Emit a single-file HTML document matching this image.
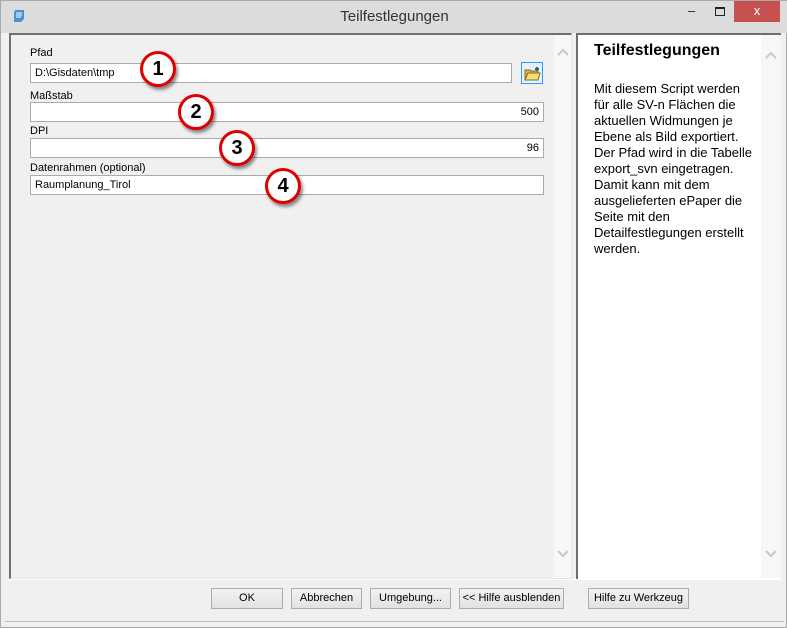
<!DOCTYPE html>
<html><head><style>
*{box-sizing:border-box;margin:0;padding:0}
body{width:787px;height:628px;background:#d6d6d6;font-family:"Liberation Sans",sans-serif;font-size:11px;color:#000;position:relative;overflow:hidden}
.win{position:absolute;left:0;top:0;width:787px;height:628px;background:#f0f0f0;border:1px solid #aaa}
.title{position:absolute;left:0;top:0;width:787px;height:32px;background:#dcdcdc;text-align:center;font-size:15px;line-height:32px;color:#333}
.close{position:absolute;left:733px;top:0;width:46px;height:21px;background:#c75050;color:#fff;text-align:center;line-height:20px;font-size:13px}
.ctl{position:absolute;top:0;font-size:13px;color:#222}
.left{position:absolute;left:8px;top:32px;width:563px;height:546px;background:#f0f0f0;border-left:2px solid #6f6f6f;border-top:2px solid #6f6f6f;border-right:1px solid #e6e6e6;border-bottom:1px solid #e6e6e6}
.sbl{position:absolute;left:553px;top:34px;width:17px;height:543px;background:#f7f7f7}
.right{position:absolute;left:575px;top:32px;width:205px;height:546px;background:#fff;border-left:2px solid #6f6f6f;border-top:2px solid #6f6f6f}
.sbr{position:absolute;left:760px;top:34px;width:20px;height:543px;background:#f7f7f7}
.lbl{position:absolute;left:29px;font-size:11px}
.inp{position:absolute;left:29px;height:20px;background:#fff;border:1px solid #ababab;font-size:11px;line-height:18px;padding:0 4px}
.btn{position:absolute;top:587px;height:21px;border:1px solid #acacac;background:linear-gradient(#f2f2f2,#e2e2e2);text-align:center;line-height:19px;font-size:11px}
.circ{position:absolute;width:36px;height:36px;border-radius:50%;background:#fff;border:3px solid #e00000;box-shadow:2px 3px 3px rgba(0,0,0,.45);text-align:center;font-weight:bold;font-size:20px;line-height:30px}
.help{position:absolute;left:593px;top:80px;font-size:13px;line-height:16px;width:160px;color:#000}
</style></head><body>
<div class="win">
<div class="title">Teilfestlegungen</div>
<svg style="position:absolute;left:10px;top:7px" width="16" height="16" viewBox="0 0 16 16"><path d="M4 2h9v9l-3 3H3V5z" fill="#4a8fd8"/><path d="M5 5h6M5 7h6M5 9h5" stroke="#fff" stroke-width="1"/></svg>
<div class="ctl" style="left:687px;top:2px">&#8211;</div>
<div style="position:absolute;left:714px;top:6px;width:10px;height:9px;border:1px solid #222;border-top-width:2px"></div>
<div class="close">x</div>
<div class="left"></div>
<div class="sbl"></div>
<svg style="position:absolute;left:556px;top:47px" width="12" height="8"><path d="M1 7l5-5 5 5" fill="none" stroke="#c8c8c8" stroke-width="2"/></svg>
<svg style="position:absolute;left:556px;top:549px" width="12" height="8"><path d="M1 1l5 5 5-5" fill="none" stroke="#c8c8c8" stroke-width="2"/></svg>
<div class="right"></div>
<div class="sbr"></div>
<svg style="position:absolute;left:764px;top:50px" width="12" height="8"><path d="M1 7l5-5 5 5" fill="none" stroke="#c8c8c8" stroke-width="2"/></svg>
<svg style="position:absolute;left:764px;top:549px" width="12" height="8"><path d="M1 1l5 5 5-5" fill="none" stroke="#c8c8c8" stroke-width="2"/></svg>
<div style="position:absolute;left:8px;top:578px;width:772px;height:1px;background:#fff"></div>
<div style="position:absolute;left:4px;top:620px;width:779px;height:1px;background:#bdbdbd"></div>

<div class="lbl" style="top:46px">Pfad</div>
<div class="inp" style="top:62px;width:482px">D:\Gisdaten\tmp</div>
<div style="position:absolute;left:520px;top:61px;width:22px;height:22px;border:1px solid #3399ff;background:#e5f1fb"></div>
<svg style="position:absolute;left:523px;top:64px" width="17" height="16" viewBox="0 0 17 16"><path d="M1 5h5l1 1h7v9H1z" fill="#d9b44a" stroke="#8a6d1a"/><path d="M1 15l3-7h12l-2 7z" fill="#f4dc7a" stroke="#8a6d1a"/><path d="M11 4h4M13 2v4" stroke="#1d5fb0" stroke-width="2"/></svg>
<div class="lbl" style="top:89px">Maßstab</div>
<div class="inp" style="top:101px;width:514px;text-align:right">500</div>
<div class="lbl" style="top:124px">DPI</div>
<div class="inp" style="top:137px;width:514px;text-align:right">96</div>
<div class="lbl" style="top:161px">Datenrahmen (optional)</div>
<div class="inp" style="top:174px;width:514px">Raumplanung_Tirol</div>

<div class="circ" style="left:139px;top:50px">1</div>
<div class="circ" style="left:177px;top:93px">2</div>
<div class="circ" style="left:218px;top:129px">3</div>
<div class="circ" style="left:264px;top:167px">4</div>

<div style="position:absolute;left:593px;top:41px;font-size:16px;font-weight:bold">Teilfestlegungen</div>
<div class="help">Mit diesem Script werden für alle SV-n Flächen die aktuellen Widmungen je Ebene als Bild exportiert. Der Pfad wird in die Tabelle export_svn eingetragen. Damit kann mit dem ausgelieferten ePaper die Seite mit den Detailfestlegungen erstellt werden.</div>

<div class="btn" style="left:210px;width:72px">OK</div>
<div class="btn" style="left:290px;width:71px">Abbrechen</div>
<div class="btn" style="left:369px;width:81px">Umgebung...</div>
<div class="btn" style="left:458px;width:105px">&lt;&lt; Hilfe ausblenden</div>
<div class="btn" style="left:587px;width:101px">Hilfe zu Werkzeug</div>
</div>
</body></html>
